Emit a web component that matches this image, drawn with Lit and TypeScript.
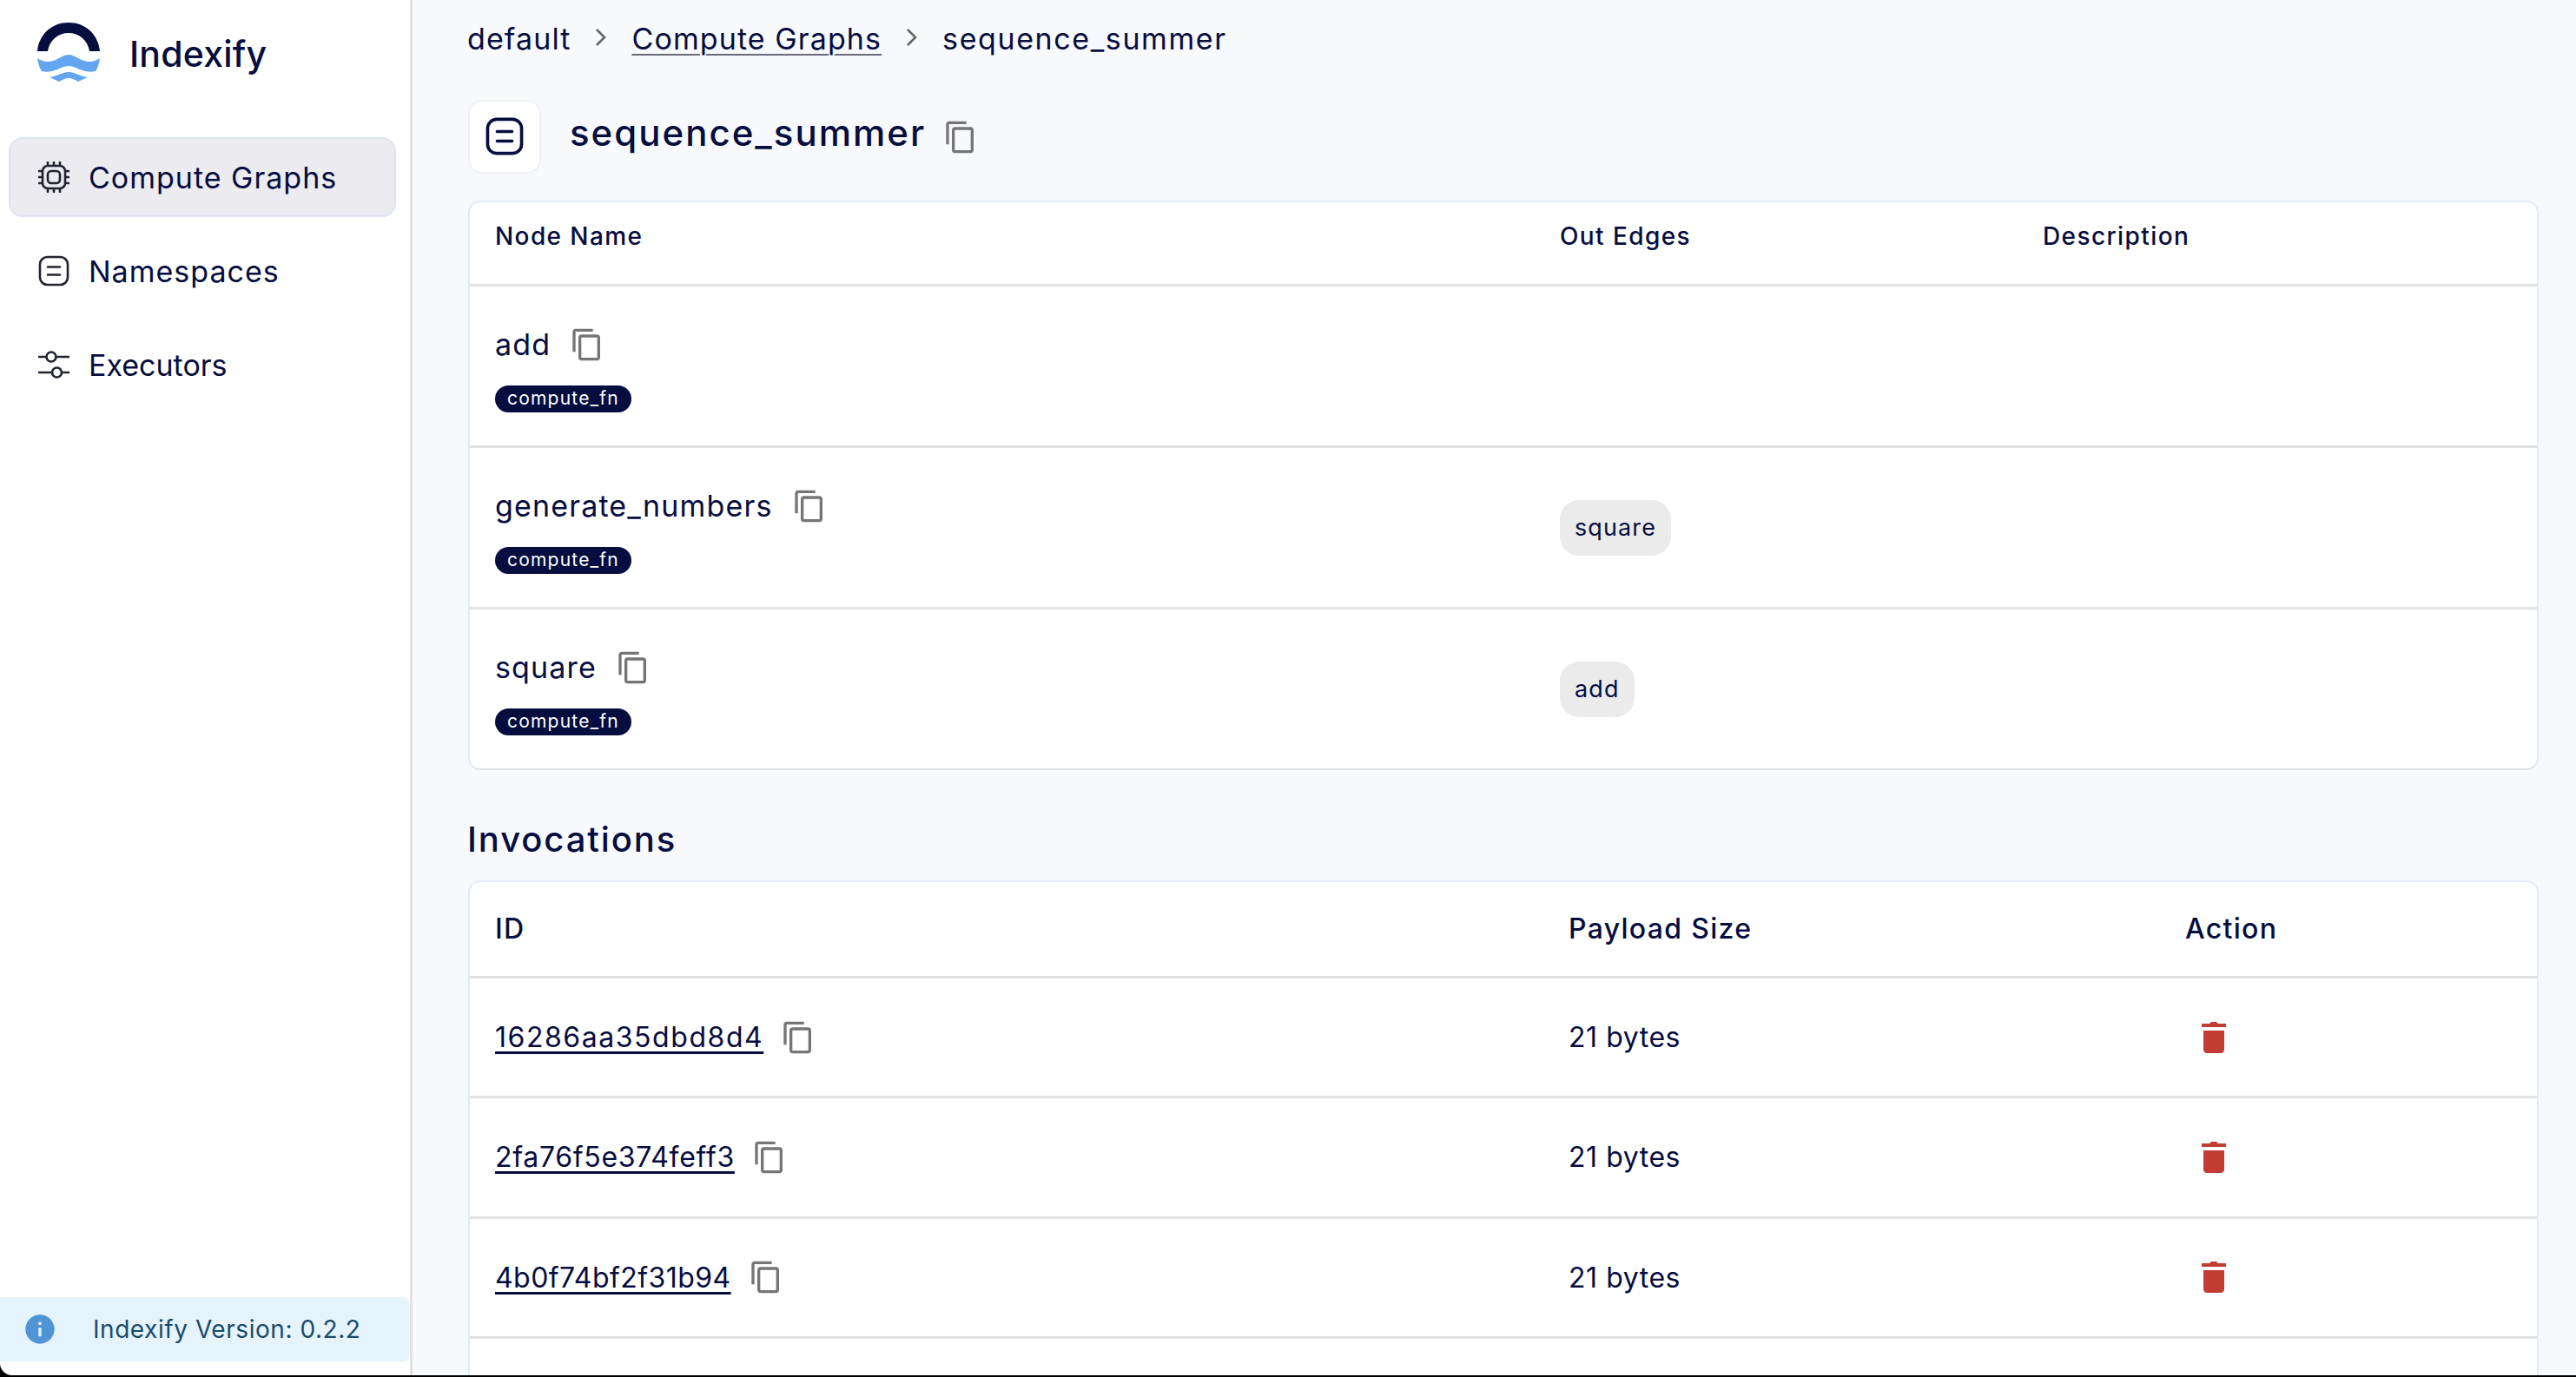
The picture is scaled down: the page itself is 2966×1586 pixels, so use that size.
import { css, html, LitElement, svg } from "lit";
import { customElement } from "lit/decorators.js";

const copyIcon = html`<svg class="copy" viewBox="0 0 24 24" fill="#757575"><path d="M16 1H4c-1.1 0-2 .9-2 2v14h2V3h12V1zm3 4H8c-1.1 0-2 .9-2 2v14c0 1.1.9 2 2 2h11c1.1 0 2-.9 2-2V7c0-1.1-.9-2-2-2zm0 16H8V7h11v14z"/></svg>`;

const trashIcon = html`<svg class="trash" viewBox="0 0 24 24" fill="#c23c33"><path d="M6 19c0 1.1.9 2 2 2h8c1.1 0 2-.9 2-2V8H6v11zM19 5v-1h-4.600l-.9-1h-3l-.9 1H5v2h14V5z"/></svg>`;

const namespaceIcon = svg`<rect x="2" y="2" width="32" height="32" rx="8.500"/><path d="M11 13.500h14M11 22.500h14"/>`;

const nodes = [
	{ name: "add", edge: "" },
	{ name: "generate_numbers", edge: "square" },
	{ name: "square", edge: "add" },
];

const invocations = [
	{ id: "16286aa35dbd8d4", tracking: 1.55 },
	{ id: "2fa76f5e374feff3", tracking: 0.7 },
	{ id: "4b0f74bf2f31b94", tracking: 0.45 },
];

@customElement("app-root")
export class AppRoot extends LitElement {
	static styles = css`
	:host {
		display: grid;
		grid-template-rows: 1584px 2px;
		height: 1586px;
		overflow: hidden;
		font-family: Inter, "Liberation Sans", sans-serif;
		color: #060d3f;
		background: #000;
	}

	.page {
		display: grid;
		grid-template-columns: 475px 1fr;
		min-height: 0;
		background: #f8f9fd;
	}

	.sidebar {
		display: flex;
		flex-direction: column;
		background: #fff;
		border-right: 3px solid #e2e2e2;
		border-bottom-left-radius: 14px;
		box-shadow: -14px 14px 0 0 #000;
	}

	.brand {
		display: flex;
		align-items: center;
		gap: 34px;
		height: 72px;
		margin: 26px 0 60px 43px;
		font-size: 41px;
		font-weight: 500;
		letter-spacing: 0.2px;
	}

	.nav {
		display: flex;
		flex-direction: column;
		gap: 16px;
		padding: 0 16px 0 10px;
		flex: 1;
	}

	.nav-item {
		display: flex;
		align-items: center;
		gap: 22px;
		height: 92px;
		padding-left: 32px;
		box-sizing: border-box;
		border: 2px solid transparent;
		border-radius: 16px;
		font-size: 34px;
		letter-spacing: 1px;
	}

	.nav-item.active {
		background: #ebebf0;
		border-color: #dde3f1;
	}

	.nav-item.tight {
		letter-spacing: 0;
	}

	.nav-item svg {
		width: 36px;
		height: 36px;
		flex: none;
		fill: none;
		stroke: #22242f;
		stroke-width: 2.600;
		stroke-linecap: round;
	}

	.version {
		display: flex;
		align-items: center;
		gap: 44px;
		height: 74px;
		margin: 0 1px 16px 0;
		padding-left: 26px;
		background: #e5f3fc;
		border-radius: 0 6px 6px 0;
		color: #1a4a6b;
		font-size: 28px;
		letter-spacing: 0.55px;
	}

	.version svg {
		width: 40px;
		height: 40px;
		flex: none;
		fill: #4f94d4;
		margin-right: -3px;
	}

	.main {
		display: flex;
		flex-direction: column;
		padding: 0 43px 0 64px;
		min-width: 0;
		overflow: hidden;
	}

	.main > * {
		flex: none;
	}

	.crumbs {
		display: flex;
		align-items: center;
		gap: 28px;
		height: 88px;
		margin-left: -1px;
		font-size: 34px;
		letter-spacing: 1.1px;
	}

	.crumbs a {
		color: inherit;
		text-decoration: underline;
		text-decoration-color: #6a6a78;
		text-underline-offset: 5px;
		text-decoration-thickness: 2px;
	}

	.crumbs .current {
		letter-spacing: 1.6px;
	}

	.crumbs svg {
		width: 14px;
		height: 24px;
		fill: none;
		stroke: #666;
		stroke-width: 2.600;
		margin-top: -2px;
	}

	.title-row {
		display: flex;
		align-items: center;
		height: 86px;
		margin-top: 26px;
		font-size: 42px;
		font-weight: 500;
		letter-spacing: 2px;
	}

	.title-text {
		margin-bottom: 9px;
	}

	.title-icon {
		display: flex;
		align-items: center;
		justify-content: center;
		width: 84px;
		height: 85px;
		margin-right: 33px;
		box-sizing: border-box;
		background: #fff;
		border: 2px solid #eff0f5;
		border-radius: 16px;
	}

	.title-icon svg {
		width: 44px;
		height: 44px;
		fill: none;
		stroke: #060d3f;
		stroke-width: 3;
		stroke-linecap: round;
	}

	.title-row .copy {
		margin-left: 20px;
		margin-top: 2px;
	}

	.copy {
		width: 40px;
		height: 40px;
		flex: none;
	}

	.trash {
		width: 48px;
		height: 48px;
		display: block;
	}

	.table {
		background: #fff;
		border: 2px solid #e3eaf8;
		border-bottom-color: #e2e2e2;
		border-radius: 14px;
	}

	.nodes {
		margin-top: 31px;
	}

	.row {
		display: grid;
		align-items: center;
		padding-left: 29px;
		border-bottom: 3px solid #e2e2e2;
	}

	.row:last-child {
		border-bottom: 0;
	}

	.nodes .row {
		grid-template-columns: 1226px 556px 1fr;
		height: 186px;
		box-sizing: border-box;
	}

	.nodes .row:last-child {
		height: 183px;
	}

	.nodes .head {
		height: 97px;
		padding-bottom: 17px;
		font-size: 28px;
		font-weight: 500;
		letter-spacing: 1.4px;
	}

	.node-cell {
		padding-top: 8px;
	}

	.node-name {
		display: flex;
		align-items: center;
		gap: 22px;
		font-size: 34px;
		letter-spacing: 1.15px;
		height: 40px;
	}

	.fn {
		display: inline-block;
		margin-top: 27px;
		padding: 0 14px;
		height: 31px;
		line-height: 30px;
		border-radius: 16px;
		background: #060d3f;
		color: #fff;
		font-size: 21px;
		letter-spacing: 1.2px;
	}

	.edge {
		display: inline-block;
		padding: 0 17px;
		height: 64px;
		line-height: 64px;
		border-radius: 22px;
		background: #ebebeb;
		font-size: 27px;
		letter-spacing: 1.1px;
	}

	.heading {
		height: 40px;
		line-height: 40px;
		margin: 60px 0 27px -1px;
		font-size: 40px;
		font-weight: 500;
		letter-spacing: 1.9px;
	}

	.runs {
		border-radius: 14px 14px 0 0;
	}

	.runs .row {
		grid-template-columns: 1236px 710px 1fr;
		height: 138.300px;
		box-sizing: border-box;
		font-size: 32px;
		letter-spacing: 0.55px;
	}

	.runs .row:last-child {
		border-bottom: 0;
	}

	.runs .head {
		height: 111px;
		padding-bottom: 2px;
		font-weight: 500;
		font-size: 32px;
		letter-spacing: 1.3px;
	}

	.run-id {
		display: flex;
		align-items: center;
		gap: 20px;
	}

	.run-id a {
		color: inherit;
		text-decoration: underline;
		text-underline-offset: 5px;
		text-decoration-thickness: 3px;
	}

	.action {
		padding-left: 9px;
	}
	`;

	render() {
		return html`
		<div class="page">
			<aside class="sidebar">
				<div class="brand">
					<svg width="72" height="72" viewBox="0 0 72 72">
						<path fill="#060d3f" d="M0 33C2 13 17 0 36 0s34 13 36 33H60C58 20 48 12 36 12S14 20 12 33z"/>
						<path fill="#64a5f0" d="M0 41c6 4 12 5 18 3 7-2 12-7 18-7s11 5 18 7c6 2 12 1 18-3-1 7-3 12-5 15-5 1-10 1-15-1-6-2-11-5-16-5s-10 3-16 5c-5 2-10 2-15 1-2-3-4-8-5-15z"/>
						<path fill="#64a5f0" d="M14 63c8-1 15-6 22-6s14 5 22 6l-11 5c-4-2-7-4-11-4s-7 2-11 4z"/>
					</svg>
					Indexify
				</div>
				<nav class="nav">
					<div class="nav-item active">
						<svg viewBox="0 0 36 36">
							<rect x="5" y="5" width="26" height="26" rx="6"/>
							<rect x="11" y="11" width="14" height="14" rx="4"/>
							<path d="M11 1v3M18 1v3M25 1v3M11 32v3M18 32v3M25 32v3M1 11h3M1 18h3M1 25h3M32 11h3M32 18h3M32 25h3"/>
						</svg>
						Compute Graphs
					</div>
					<div class="nav-item">
						<svg viewBox="0 0 36 36">${namespaceIcon}</svg>
						Namespaces
					</div>
					<div class="nav-item tight">
						<svg viewBox="0 0 36 36">
							<path d="M1 9h8.500M20.500 9h14.500M1 27h15M27.500 27h7.500"/>
							<circle cx="15" cy="9" r="5.500"/>
							<circle cx="21.500" cy="27" r="5.500"/>
						</svg>
						Executors
					</div>
				</nav>
				<div class="version">
					<svg viewBox="0 0 24 24"><path d="M12 2C6.480 2 2 6.480 2 12s4.480 10 10 10 10-4.480 10-10S17.520 2 12 2zm1 15h-2v-6h2v6zm0-8h-2V7h2v2z"/></svg>
					Indexify Version: 0.2.2
				</div>
			</aside>
			<main class="main">
				<div class="crumbs">
					<span>default</span>
					<svg viewBox="0 0 14 24"><path d="M2 3l9 9-9 9"/></svg>
					<a href="#">Compute Graphs</a>
					<svg viewBox="0 0 14 24"><path d="M2 3l9 9-9 9"/></svg>
					<span class="current">sequence_summer</span>
				</div>
				<div class="title-row">
					<div class="title-icon"><svg viewBox="0 0 36 36">${namespaceIcon}</svg></div>
					<span class="title-text">sequence_summer</span>
					${copyIcon}
				</div>
				<section class="table nodes">
					<div class="row head">
						<div>Node Name</div>
						<div>Out Edges</div>
						<div>Description</div>
					</div>
					${nodes.map((n) => html`
						<div class="row">
							<div class="node-cell">
								<div class="node-name">${n.name} ${copyIcon}</div>
								<span class="fn">compute_fn</span>
							</div>
							<div>${n.edge ? html`<span class="edge">${n.edge}</span>` : ""}</div>
							<div></div>
						</div>
					`)}
				</section>
				<div class="heading">Invocations</div>
				<section class="table runs">
					<div class="row head">
						<div>ID</div>
						<div>Payload Size</div>
						<div>Action</div>
					</div>
					${invocations.map((run) => html`
						<div class="row">
							<div class="run-id"><a href="#" style="letter-spacing: ${run.tracking}px">${run.id}</a> ${copyIcon}</div>
							<div>21 bytes</div>
							<div class="action">${trashIcon}</div>
						</div>
					`)}
					<div class="row"></div>
				</section>
			</main>
		</div>
		<div></div>
		`;
	}
}
